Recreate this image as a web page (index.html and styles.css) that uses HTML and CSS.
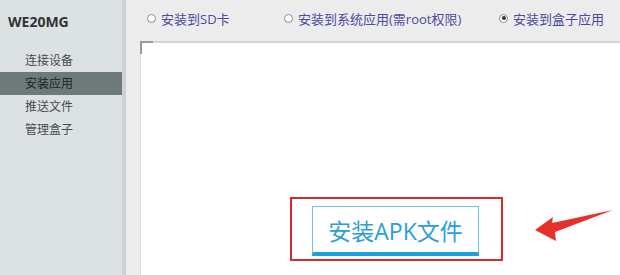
FILE: index.html
```html
<!DOCTYPE html>
<html lang="zh-CN">

<head>
  <meta charset="UTF-8" />
  <meta name="viewport" content="width=device-width, initial-scale=1.0" />
  <link rel="stylesheet" href="styles.css">
  <title>WE20MG</title>
</head>

<body>
  <aside class="sidebar">
    <div class="brand">WE20MG</div>
    <ul class="menu">
      <li class="menu-item">连接设备</li>
      <li class="menu-item active">安装应用</li>
      <li class="menu-item">推送文件</li>
      <li class="menu-item">管理盒子</li>
    </ul>
  </aside>

  <main class="main">
    <form class="options">
      <label class="option"><span class="radio"></span>安装到SD卡</label>
      <label class="option"><span class="radio"></span>安装到系统应用(需root权限)</label>
      <label class="option"><span class="radio checked"></span>安装到盒子应用</label>
    </form>

    <div class="panel">
      <div class="highlight">
        <button class="install">安装APK文件</button>
      </div>

      <svg class="arrow" width="90" height="45" viewBox="530 205 90 45">
        <polygon points="535,231 553,218 552,224 613,211 555,233 556,242" fill="#e8302b" />
      </svg>
    </div>
  </main>
</body>

</html>
```

FILE: styles.css
```css
* {
  margin: 0px;
  padding: 0px;
  box-sizing: border-box;
  font-family: "Open Sans", "Noto Sans CJK SC", sans-serif;
}

body {
  display: flex;
  width: 620px;
  height: 275px;
  overflow: hidden;
  background-color: #ececec;
}

.sidebar {
  width: 126px;
  flex-shrink: 0;
  background-color: #dce2e4;
  border-right: 4px solid #cdd2d4;
}

.brand {
  height: 49px;
  padding: 12px 0 0 8px;
  font-size: 14px;
  font-weight: 700;
  color: #333;
}

.menu {
  list-style: none;
}

.menu-item {
  height: 23px;
  line-height: 23px;
  padding-left: 25px;
  font-size: 12px;
  color: #4a4a4a;
}

.menu-item.active {
  background-color: #6e7a7a;
  color: #1e2222;
}

.main {
  flex: 1;
  display: flex;
  flex-direction: column;
}

.options {
  height: 41px;
  display: grid;
  grid-template-columns: 137px 215px auto;
  align-items: center;
  padding: 0 0 5px 21px;
}

.option {
  display: flex;
  align-items: center;
  font-size: 13px;
  color: #4c4a9e;
}

.radio {
  width: 9px;
  height: 9px;
  margin-right: 5px;
  border: 1px solid #8a8a9a;
  border-radius: 50%;
  background-color: #fff;
  display: flex;
  align-items: center;
  justify-content: center;
}

.radio.checked::after {
  content: "";
  width: 4px;
  height: 4px;
  border-radius: 50%;
  background-color: #333;
}

.panel {
  flex: 1;
  position: relative;
  margin-left: 14px;
  padding: 154px 0 0 149px;
  background-color: #fff;
  border-top: 2px solid #d6d6d6;
  border-left: 1px solid #dcdcdc;
}

.panel::before {
  content: "";
  position: absolute;
  top: -2px;
  left: -1px;
  width: 11px;
  height: 11px;
  border-top: 2px solid #9a9a9a;
  border-left: 2px solid #9a9a9a;
}

.highlight {
  width: 213px;
  height: 64px;
  padding: 7px 0 0 20px;
  border: 2px solid #d42a2e;
}

.install {
  width: 167px;
  height: 50px;
  font-size: 23px;
  color: #2b9ed8;
  background-color: #fff;
  border: 1px solid #6cc3e8;
  border-bottom: 4px solid #1ba1e2;
}

.arrow {
  position: absolute;
  left: 389px;
  top: 161px;
}
```
